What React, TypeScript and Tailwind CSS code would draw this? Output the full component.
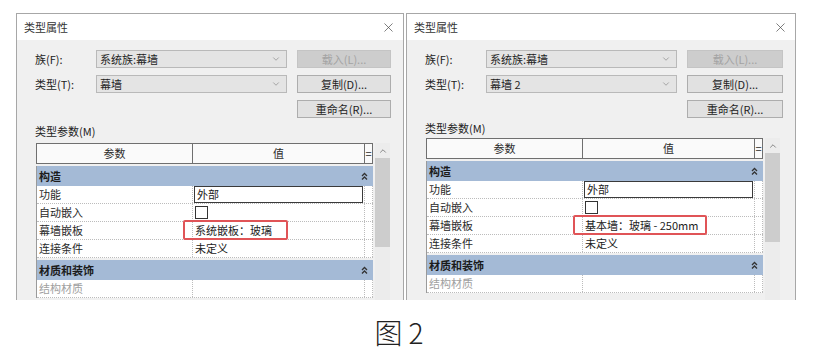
import { ChevronDown, ChevronUp, X } from "lucide-react";
import type { ReactNode } from "react";

/**
 * Two Revit "类型属性" dialogs side by side (curtain wall type before and
 * after the panel is swapped), with the figure caption underneath.
 */

function DoubleUp() {
  return (
    <svg width="7" height="8" viewBox="0 0 7 8" fill="none" stroke="#333" strokeWidth="1.3">
      <path d="M1 4L3.5 1.5L6 4" />
      <path d="M1 7.5L3.5 5L6 7.5" />
    </svg>
  );
}

function Combo({ value }: { value: string }) {
  return (
    <div className="flex h-[18px] w-[191px] items-center justify-between border border-[#b9b9b9] bg-[#e4e4e4] pl-[3px] pr-[5px] text-[#1e1e1e]">
      <span>{value}</span>
      <ChevronDown size={10} strokeWidth={1.4} color="#777" />
    </div>
  );
}

function Button({ children, disabled }: { children: ReactNode; disabled?: boolean }) {
  return (
    <div
      className={
        disabled
          ? "ml-[10px] flex h-[18px] flex-1 items-center justify-center border border-[#c4c4c4] bg-[#cdcdcd] text-[#a3a3a3]"
          : "ml-[10px] flex h-[18px] flex-1 items-center justify-center border border-[#adadad] bg-[#e1e1e1] text-[#1e1e1e]"
      }
    >
      {children}
    </div>
  );
}

function Section({ title, gap }: { title: string; gap?: boolean }) {
  return (
    <div
      className={`flex h-[20px] items-center justify-between bg-[#a4bad6] pl-[2px] pr-[5px] font-bold text-[#1b1b1b] ${
        gap ? "mt-[2px]" : ""
      }`}
    >
      <span>{title}</span>
      <DoubleUp />
    </div>
  );
}

function Row({ name, children, muted }: { name: string; children?: ReactNode; muted?: boolean }) {
  return (
    <div className="flex h-[18px] border-b border-dotted border-[#bcbcbc] bg-white">
      <div className={`flex w-[155px] items-center pl-[2px] ${muted ? "text-[#a0a0a0]" : "text-[#2a2a2a]"}`}>
        {name}
      </div>
      <div className="relative flex flex-1 items-center border-l border-dotted border-[#bcbcbc]">{children}</div>
      <div className="w-[9px] border-x border-dotted border-[#bcbcbc]" />
    </div>
  );
}

function Panel({
  width,
  typeName,
  panelName,
  redWidth,
  tight,
}: {
  width: string;
  typeName: string;
  panelName: string;
  redWidth: string;
  tight?: boolean;
}) {
  return (
    <div className={`flex h-[287px] flex-col border border-b-0 border-[#a7a7a7] bg-[#f0f0f0] ${width}`}>
      <div className="flex h-[26px] items-center justify-between bg-white pl-[7px] pr-[7px] text-[#333]">
        <span>类型属性</span>
        <X size={15} strokeWidth={1.1} color="#444" />
      </div>

      <div className="flex min-h-0 flex-1 flex-col pl-[18px] pr-[12px] pt-[10px]">
        <div className="flex flex-col gap-[7px]">
          <div className="flex items-center">
            <span className="w-[61px]">族(F):</span>
            <Combo value="系统族:幕墙" />
            <Button disabled>载入(L)...</Button>
          </div>
          <div className="flex items-center">
            <span className="w-[61px]">类型(T):</span>
            <Combo value={typeName} />
            <Button>复制(D)...</Button>
          </div>
          <div className="flex items-center pl-[252px]">
            <Button>重命名(R)...</Button>
          </div>
        </div>

        <div className={tight ? "mt-[3px] h-[14px] leading-[14px]" : "mt-[6px] h-[14px] leading-[14px]"}>
          类型参数(M)
        </div>

        <div className={`ml-[1px] flex min-h-0 flex-1 gap-[2px] overflow-hidden ${tight ? "mt-[3px]" : "mt-[5px]"}`}>
          <div className="flex w-[337px] flex-col">
            <div className="flex h-[21px] border border-[#6f6f6f] bg-[#fafafa] text-[#2a2a2a]">
              <div className="flex w-[155px] items-center justify-center">参数</div>
              <div className="flex flex-1 items-center justify-center border-l border-[#6f6f6f]">值</div>
              <div className="flex w-[8px] items-center justify-center border-l border-[#6f6f6f]">=</div>
            </div>

            <div className="mt-[2px] flex flex-col border-l border-[#9a9a9a]">
              <Section title="构造" />
              <Row name="功能">
                <div className="ml-[1px] mr-[1px] flex h-[17px] flex-1 items-center border border-[#3a3a3a] pl-[2px]">
                  外部
                </div>
              </Row>
              <Row name="自动嵌入">
                <div className="ml-[2px] h-[13px] w-[13px] border border-[#333] bg-white" />
              </Row>
              <Row name="幕墙嵌板">
                <span className="pl-[2px]">{panelName}</span>
                <div
                  className={`absolute left-[-10px] top-[-2px] h-[20px] rounded-[2px] border-2 border-[#e05457] ${redWidth}`}
                />
              </Row>
              <Row name="连接条件">
                <span className="pl-[2px]">未定义</span>
              </Row>
              <Section title="材质和装饰" gap />
              <Row name="结构材质" muted />
            </div>
          </div>

          <div className="flex w-[15px] flex-col bg-[#ececec]">
            <div className="flex h-[15px] items-center justify-center">
              <ChevronUp size={10} strokeWidth={1.6} color="#555" />
            </div>
            <div className="h-[89px] bg-[#cdcdcd]" />
          </div>
        </div>
      </div>
    </div>
  );
}

export default function App() {
  return (
    <div className="h-[357px] w-[813px] overflow-hidden bg-white font-['Noto_Sans_CJK_SC','Liberation_Sans',sans-serif] text-[11px] text-[#222]">
      <div className="flex gap-[2px] pl-[16px] pt-[13px]">
        <Panel width="w-[388px]" typeName="幕墙" panelName="系统嵌板：玻璃" redWidth="w-[105px]" />
        <Panel
          width="w-[390px]"
          typeName="幕墙 2"
          panelName="基本墙：玻璃 - 250mm"
          redWidth="w-[134px]"
          tight
        />
      </div>
      <div className="mt-[18px] flex justify-center pr-[15px] text-[28px] font-light leading-none text-[#222]">
        图 2
      </div>
    </div>
  );
}
